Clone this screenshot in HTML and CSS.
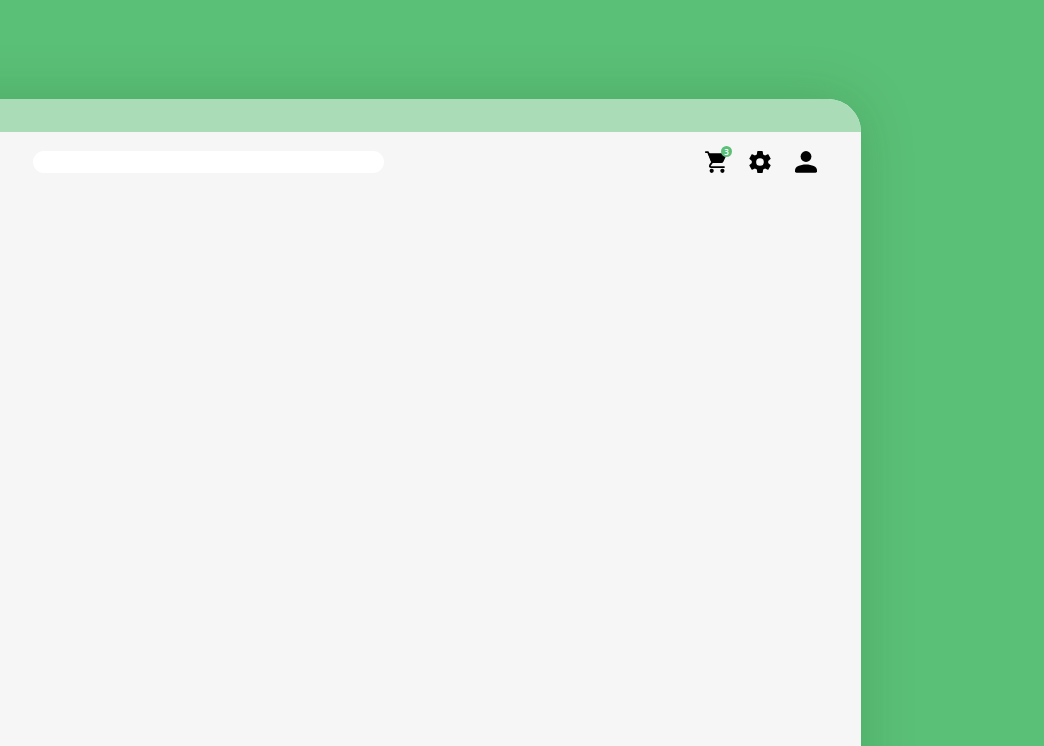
FILE: index.html
```html
<!DOCTYPE html>
<html lang="en">
<head>
<meta charset="utf-8">
<title>Shop</title>
<link rel="stylesheet" href="styles.css">
</head>
<body>
<div class="page">
<main class="window">
  <div class="titlebar"></div>
  <header class="toolbar">
    <input class="search" type="search" aria-label="Search">
    <nav class="actions" aria-label="Account">
      <button class="action" type="button" aria-label="Cart, 3 items">
        <svg class="icon" viewBox="0 0 22 22" aria-hidden="true"><path d="M2.800 1.100H5L9.200 11.200L7.200 13.900Q6 16.100 8.400 16.100H21" fill="none" stroke="currentColor" stroke-width="1.800" stroke-linecap="round" stroke-linejoin="round"/><path d="M5 2.300H22.500Q24.200 2.300 23.500 3.900L20.500 10.500Q19.800 12.100 18.300 12.100H8.600Z"/><circle cx="8.700" cy="19.800" r="2.100"/><circle cx="19.400" cy="19.800" r="2.100"/></svg>
        <span class="badge">3</span>
      </button>
      <button class="action" type="button" aria-label="Settings">
        <svg class="icon" viewBox="2 2 20 20" aria-hidden="true"><path d="M19.430 12.980c.04-.32.07-.64.07-.98s-.03-.66-.07-.98l2.110-1.650c.19-.15.24-.42.12-.64l-2-3.460c-.12-.22-.39-.3-.61-.22l-2.490 1c-.52-.4-1.080-.73-1.690-.98l-.38-2.650A.49.49 0 0 0 14 2h-4c-.25 0-.46.18-.49.42l-.38 2.650c-.61.25-1.170.59-1.690.98l-2.490-1c-.23-.09-.49 0-.61.22l-2 3.460c-.13.22-.07.49.12.64l2.110 1.650c-.04.32-.07.65-.07.98s.03.66.07.98l-2.110 1.650c-.19.15-.24.42-.12.640l2 3.460c.12.22.39.3.61.22l2.490-1c.52.4 1.080.73 1.690.98l.38 2.650c.03.24.24.42.49.42h4c.25 0 .46-.18.49-.42l.38-2.650c.61-.25 1.170-.59 1.690-.98l2.490 1c.23.09.49 0 .61-.22l2-3.460c.12-.22.07-.49-.12-.64l-2.110-1.650zM12 15.500a3.500 3.500 0 1 1 0-7 3.500 3.500 0 0 1 0 7z"/></svg>
      </button>
      <button class="action" type="button" aria-label="Profile">
        <svg class="icon" viewBox="0 0 22 22" aria-hidden="true"><circle cx="11" cy="5.500" r="5.400"/><path d="M0 19.300C0 15.800 5 13.600 11 13.600S22 15.800 22 19.300V20.300Q22 21.700 20.500 21.700H1.500Q0 21.700 0 20.300Z"/></svg>
      </button>
    </nav>
  </header>
</main>
</div>
</body>
</html>
```
FILE: styles.css
```css
* {
  box-sizing: border-box;
}

body {
  margin: 0;
}

.page {
  display: flex;
  height: 100vh;
  padding: 99px 183px 0 0;
  background: #5bc077;
  font-family: "Open Sans", sans-serif;
  overflow: hidden;
}

/* The window runs past the left and bottom edges of the page. */
.window {
  flex: 1;
  margin: 0 0 -80px -80px;
  border-radius: 0 33px 0 0;
  background: #f6f6f6;
  box-shadow: 0 0 55px rgba(0, 60, 20, 0.18);
}

.titlebar {
  height: 33px;
  border-radius: 0 33px 0 0;
  background: #a9dcb7;
}

.toolbar {
  display: flex;
  align-items: center;
  justify-content: space-between;
  gap: 24px;
  padding: 19px 44px 19px 113px;
}

.search {
  flex: 0 1 351px;
  min-width: 0;
  height: 22px;
  padding: 0 11px;
  border: 0;
  border-radius: 11px;
  background: #fff;
  font: inherit;
  font-size: 12px;
}

.actions {
  display: flex;
  gap: 24px;
}

.action {
  position: relative;
  width: 22px;
  height: 22px;
  padding: 0;
  border: 0;
  background: none;
  color: #000;
  cursor: pointer;
}

.icon {
  display: block;
  width: 22px;
  height: 22px;
  overflow: visible;
  fill: currentColor;
}

.badge {
  position: absolute;
  top: -5px;
  right: -7px;
  width: 11px;
  height: 11px;
  border-radius: 50%;
  background: #5bc077;
  color: #fff;
  font-family: "Open Sans", sans-serif;
  font-size: 8px;
  font-weight: 600;
  line-height: 11px;
  text-align: center;
}
```
